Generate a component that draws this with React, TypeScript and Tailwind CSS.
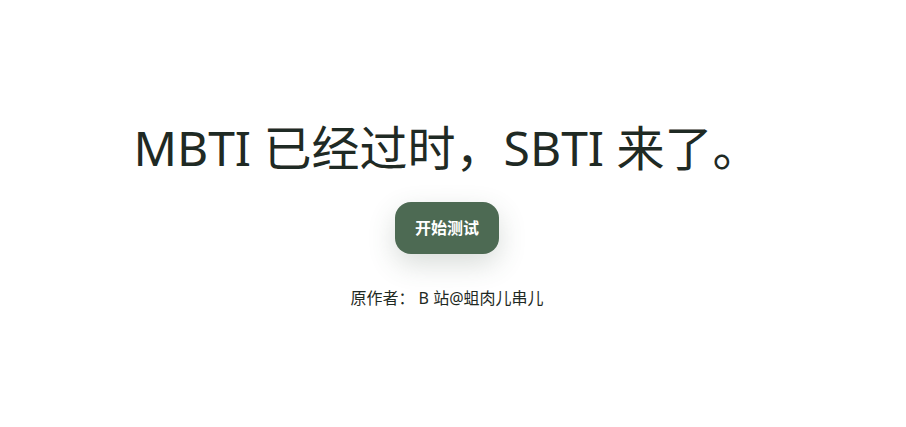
export default function App() {
  return (
    <div
      className="min-h-screen bg-white flex flex-col items-center justify-center pr-3 text-[#1f2a24]"
      style={{ fontFamily: "'Segoe UI', 'Noto Sans', 'Noto Sans CJK SC', sans-serif" }}
    >
      <h1 className="text-[48px] leading-tight font-normal mb-6">
        MBTI 已经过时，SBTI 来了。
      </h1>
      <button className="h-[52px] px-5 rounded-2xl bg-[#4d6a53] text-white text-base font-bold shadow-[0_10px_28px_rgba(60,80,65,0.2)]">
        开始测试
      </button>
      <p className="mt-8 text-base">原作者： B 站@蛆肉儿串儿</p>
    </div>
  );
}
